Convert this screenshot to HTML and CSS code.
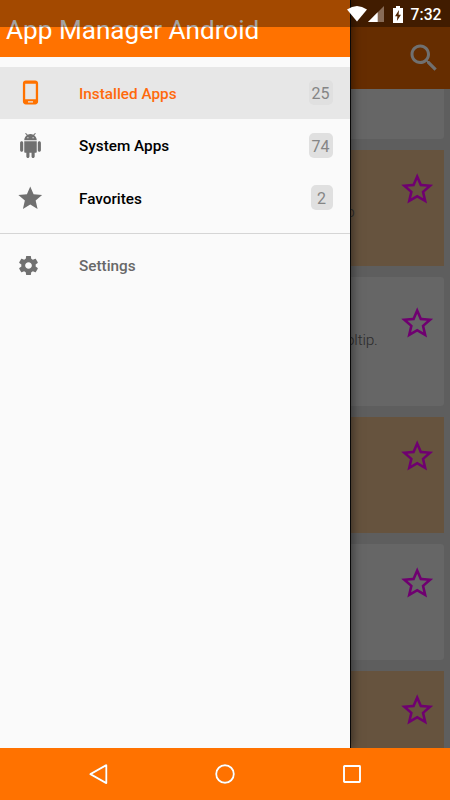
FILE: index.html
```html
<!DOCTYPE html>
<html lang="en">
<head>
<meta charset="utf-8">
<title>App Manager Android</title>
<link rel="stylesheet" href="styles.css">
</head>
<body>
<svg class="defs" aria-hidden="true">
  <symbol id="star-outline" viewBox="0 0 24 24"><path d="M22 9.24l-7.19-.62L12 2 9.19 8.63 2 9.24l5.46 4.73L5.82 21 12 17.27 18.18 21l-1.63-7.03L22 9.24zM12 15.4l-3.76 2.27 1-4.28-3.32-2.88 4.38-.38L12 6.1l1.71 4.04 4.38.38-3.32 2.88 1 4.28L12 15.4z"/></symbol>
</svg>
<div class="screen">
  <main class="app">
    <header class="toolbar">
      <svg class="search" viewBox="0 0 24 24"><path d="M15.5 14h-.79l-.28-.27C15.41 12.59 16 11.11 16 9.5 16 5.91 13.09 3 9.5 3S3 5.91 3 9.5 5.91 16 9.5 16c1.61 0 3.09-.59 4.23-1.57l.27.28v.79l5 4.99L20.49 19l-4.99-5zm-6 0C7.01 14 5 11.99 5 9.5S7.01 5 9.5 5 14 7.01 14 9.5 11.99 14 9.5 14z"/></svg>
    </header>
    <div class="list">
      <div class="card first"></div>
      <div class="card tan"><span class="desc short">o</span><svg class="fav"><use href="#star-outline"/></svg></div>
      <div class="card tall"><span class="desc">tooltip.</span><svg class="fav"><use href="#star-outline"/></svg></div>
      <div class="card tan"><svg class="fav"><use href="#star-outline"/></svg></div>
      <div class="card"><svg class="fav"><use href="#star-outline"/></svg></div>
      <div class="card tan"><svg class="fav"><use href="#star-outline"/></svg></div>
    </div>
  </main>

  <aside class="drawer">
    <header class="drawer-head">App Manager Android</header>
    <nav class="menu">
      <div class="item active">
        <svg class="icon" viewBox="0 0 24 24"><path d="M16.500 .5H7.500C5.900 .5 4.700 1.700 4.700 3.300v17.400c0 1.600 1.200 2.800 2.800 2.800h9c1.600 0 2.800-1.200 2.800-2.800V3.300c0-1.600-1.200-2.800-2.800-2.800zM14.400 21.600H9.600v-1.200h4.800v1.200zm2.700-3.200H6.900V3.600h10.200v14.800z"/></svg>
        <span class="label">Installed Apps</span><span class="badge">25</span>
      </div>
      <div class="item">
        <svg class="icon" viewBox="0 0 24 24"><path d="M6 18c0 .55.45 1 1 1h1v3.500c0 .83.67 1.500 1.500 1.500s1.500-.67 1.500-1.500V19h2v3.500c0 .83.67 1.500 1.500 1.500s1.500-.67 1.500-1.500V19h1c.55 0 1-.45 1-1V8H6v10zM3.500 8C2.670 8 2 8.670 2 9.500v7c0 .83.67 1.500 1.500 1.500S5 17.330 5 16.500v-7C5 8.670 4.330 8 3.500 8zm17 0c-.83 0-1.500.67-1.500 1.500v7c0 .83.67 1.500 1.500 1.500s1.500-.67 1.500-1.500v-7c0-.83-.67-1.500-1.500-1.500zm-4.970-5.840l1.300-1.300c.2-.2.2-.51 0-.71-.2-.2-.51-.2-.71 0l-1.480 1.480C13.850 1.230 12.950 1 12 1c-.96 0-1.860.23-2.660.63L7.850.15c-.2-.2-.51-.2-.71 0-.2.2-.2.51 0 .71l1.310 1.310C6.970 3.260 6 5.010 6 7h12c0-1.990-.97-3.750-2.470-4.840zM10 5H9V4h1v1zm5 0h-1V4h1v1z"/></svg>
        <span class="label">System Apps</span><span class="badge">74</span>
      </div>
      <div class="item">
        <svg class="icon star" viewBox="0 0 24 24"><path d="M12 17.270L18.180 21l-1.640-7.030L22 9.240l-7.190-.61L12 2 9.190 8.630 2 9.240l5.460 4.730L5.820 21z"/></svg>
        <span class="label">Favorites</span><span class="badge">2</span>
      </div>
    </nav>
    <div class="item settings">
      <svg class="icon gear" viewBox="0 0 24 24"><path d="M19.430 12.980c.04-.32.07-.64.07-.98s-.03-.66-.07-.98l2.110-1.650c.19-.15.24-.42.12-.64l-2-3.460c-.12-.22-.39-.3-.61-.22l-2.490 1c-.52-.4-1.080-.73-1.690-.98l-.38-2.650C14.460 2.180 14.250 2 14 2h-4c-.25 0-.46.18-.49.42l-.38 2.650c-.61.25-1.170.59-1.690.98l-2.490-1c-.23-.09-.49 0-.61.22l-2 3.460c-.13.22-.07.49.12.64l2.110 1.650c-.04.32-.07.65-.07.98s.03.66.07.98l-2.110 1.650c-.19.15-.24.42-.12.64l2 3.460c.12.22.39.3.61.22l2.490-1c.52.4 1.080.73 1.690.98l.38 2.650c.03.24.24.42.49.42h4c.25 0 .46-.18.49-.42l.38-2.650c.61-.25 1.170-.59 1.690-.98l2.490 1c.23.09.49 0 .61-.22l2-3.460c.12-.22.07-.49-.12-.64l-2.110-1.650zM12 15.500c-1.930 0-3.500-1.570-3.500-3.500s1.570-3.500 3.500-3.500 3.500 1.570 3.500 3.500-1.570 3.500-3.500 3.500z"/></svg>
      <span class="label">Settings</span>
    </div>
  </aside>

  <div class="status">
    <svg class="wifi" viewBox="0 0 20 16"><path d="M0 3.500Q10-3.500 20 3.500L10 15.500z" fill="#fff"/></svg>
    <svg class="cell" viewBox="0 0 16 16"><path d="M0 16L16 0v16z" fill="#876b57"/><path d="M0 16L9.700 6.300V16z" fill="#fff"/></svg>
    <svg class="battery" viewBox="0 0 10 17"><path d="M3 0h4v2h3v15H0V2h3z" fill="#fff"/><path d="M6 4L2 10.200h2.400L3.900 15 8 8.700H5.600z" fill="#4f2300"/></svg>
    <span class="clock">7:32</span>
  </div>

  <footer class="navbar">
    <svg class="back" viewBox="0 0 24 24"><path d="M18.300 3.200v17.900L2.400 12.100z"/></svg>
    <svg viewBox="0 0 24 24"><circle cx="12" cy="12" r="8.800"/></svg>
    <svg viewBox="0 0 24 24"><rect x="4" y="4" width="16" height="16" rx=".5"/></svg>
  </footer>
</div>
</body>
</html>
```
FILE: styles.css
```css
* { box-sizing: border-box; }
body {
  margin: 0;
  font-family: Roboto, "Liberation Sans", sans-serif;
}
svg { display: block; flex: none; }
.defs { position: absolute; width: 0; height: 0; }
.screen {
  position: relative;
  width: 450px;
  height: 800px;
  overflow: hidden;
  display: flex;
  flex-direction: column;
}
.app {
  flex: 1;
  min-height: 0;
  overflow: hidden;
  background: #5e5e5e;
}
.toolbar {
  height: 89px;
  padding: 27px 8px 0 0;
  display: flex;
  align-items: center;
  justify-content: flex-end;
  background: #662d00;
}
.search { width: 36px; height: 36px; fill: #707070; }
.list {
  display: flex;
  flex-direction: column;
  gap: 11px;
  padding-right: 6px;
}
.card {
  flex: none;
  height: 116px;
  padding: 20.300px 8px 0 0;
  display: flex;
  justify-content: flex-end;
  background: #666;
  border-radius: 3px;
}
.card.first { height: 50px; border-radius: 0 0 3px 3px; }
.card.tan { background: #66533e; border-radius: 0; }
.card.tall { height: 129px; padding-top: 26.500px; }
.fav { width: 38.400px; height: 38.400px; fill: #6f0070; }
.desc {
  margin: 26px 20px 0 0;
  font-size: 15.500px;
  line-height: 20px;
  font-weight: 300;
  letter-spacing: -.2px;
  color: #2c2c2c;
}
.desc.short { margin: 32px 43px 0 0; }
.drawer {
  position: absolute;
  left: 0;
  top: 0;
  width: 350px;
  height: 748px;
  background: #fafafa;
  box-shadow: 1px 0 0 #080808, 2px 0 10px rgba(0, 0, 0, .5);
}
.drawer-head {
  height: 57px;
  padding: 15px 0 0 6px;
  font-size: 26.150px;
  line-height: 30px;
  color: #fff;
  background: #ff7200;
  white-space: nowrap;
}
.menu { padding: 9.500px 0 8.500px; border-bottom: 1px solid #d5d5d5; }
.item {
  height: 52.500px;
  padding: 0 17.500px 0 18px;
  display: flex;
  align-items: center;
  color: #000;
  font-size: 15.300px;
  font-weight: 500;
}
.item.active { background: #e7e7e7; color: #ff6a0d; }
.icon {
  width: 25px;
  height: 25px;
  margin-right: 36px;
  fill: #707070;
}
.active .icon { fill: #ff7200; }
.icon.star { width: 28.500px; height: 28.500px; margin: 0 34.500px 0 -2px; }
.icon.gear { width: 23px; height: 23px; margin: 0 39px 0 -1px; }
.label { flex: 1; padding-top: 1.500px; }
.badge {
  height: 25px;
  padding: 0 3px;
  min-width: 22px;
  border-radius: 5px;
  background: #e0e0e0;
  color: #858585;
  font-size: 16px;
  font-weight: 400;
  line-height: 27px;
  text-align: center;
}
.settings { height: 64px; color: #686868; }
.status {
  position: absolute;
  left: 0;
  top: 0;
  width: 450px;
  height: 27px;
  padding: 1px 8.500px 0 0;
  display: flex;
  justify-content: flex-end;
  align-items: center;
  background: rgba(0, 0, 0, .36);
}
.wifi { width: 20px; height: 16px; margin-right: 1px; }
.cell { width: 16px; height: 16px; margin-right: 9px; }
.battery { width: 10px; height: 17px; margin-right: 8px; }
.clock { color: #fff; font-size: 15.700px; font-weight: 500; line-height: 26px; padding-top: 1px; }
.navbar {
  position: relative;
  height: 52px;
  padding: 0 86px;
  display: flex;
  align-items: center;
  justify-content: space-between;
  background: #ff7200;
}
.navbar svg {
  width: 24px;
  height: 24px;
  fill: none;
  stroke: #fff;
  stroke-width: 1.900;
  stroke-linejoin: round;
  filter: drop-shadow(0 .5px .5px rgba(0, 0, 0, .3));
}
.navbar .back { margin: 0 -2px 0 2px; }
```
